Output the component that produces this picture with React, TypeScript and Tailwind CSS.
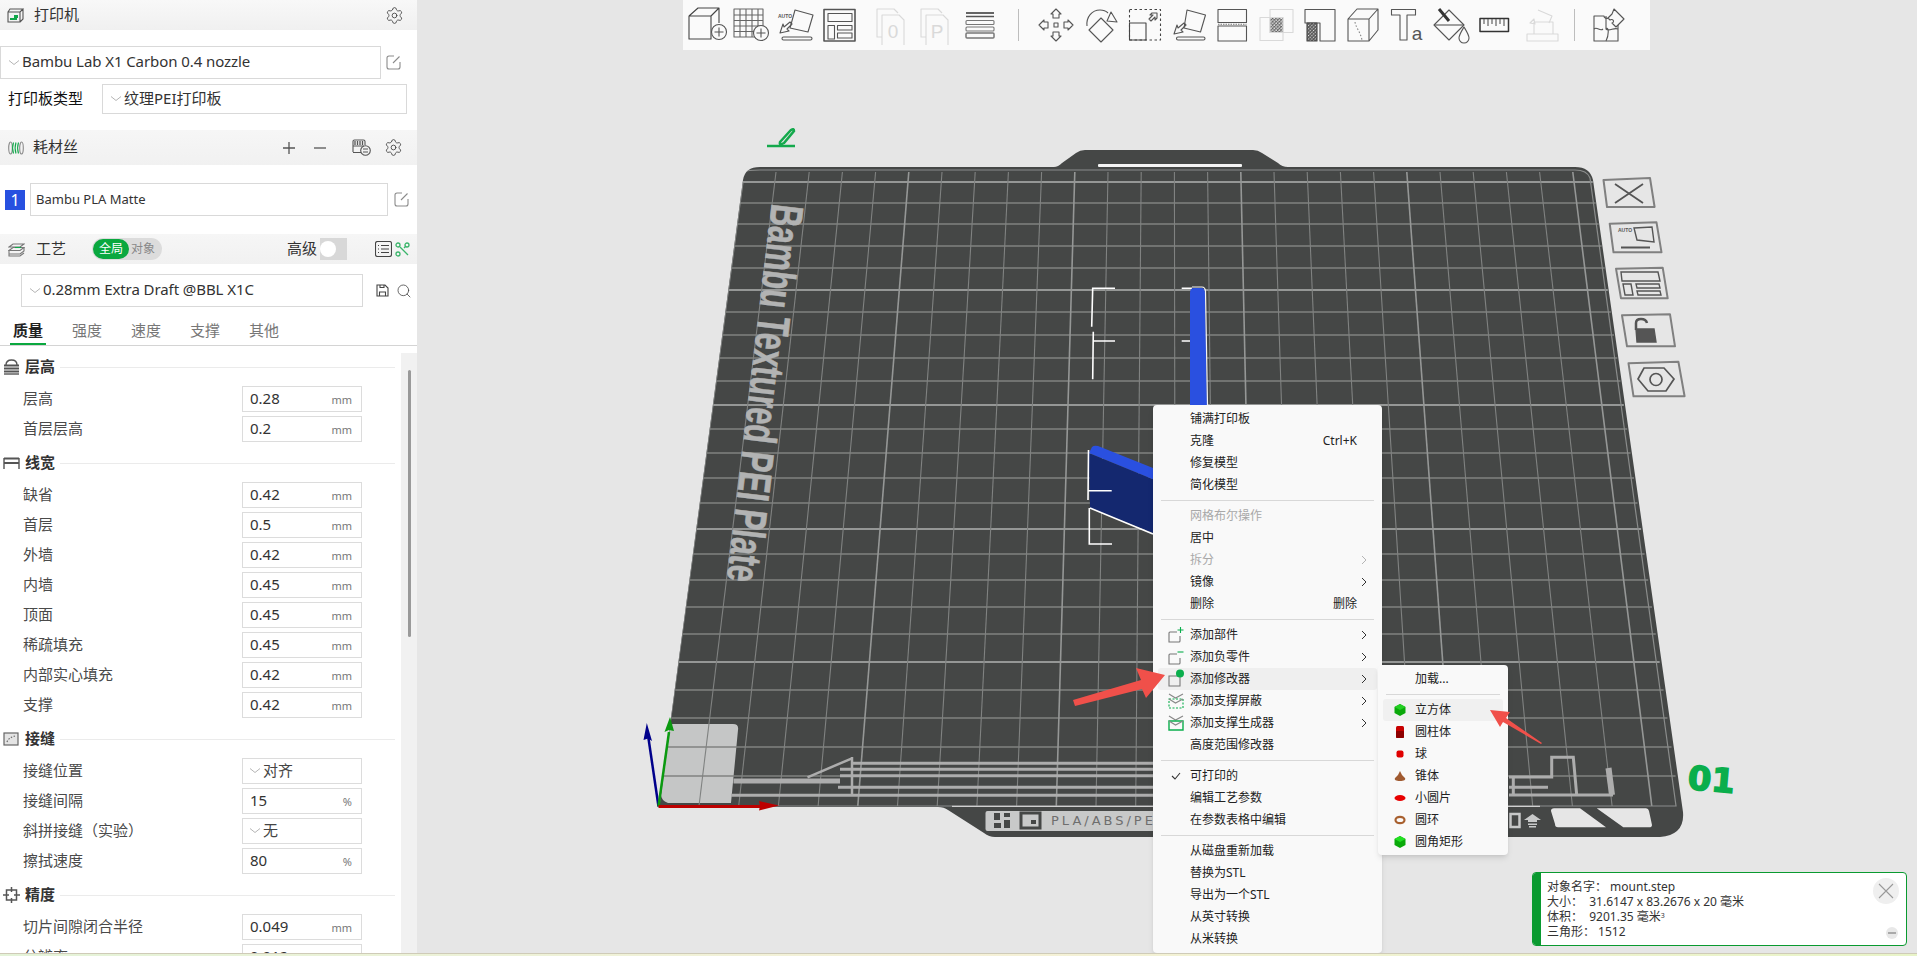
import { Search, Settings } from 'lucide-react';
import { ReactNode } from 'react';

const H_LINES = [182, 203, 224, 246, 268, 290, 312, 335, 358, 381, 405, 429, 453, 478, 503, 529, 554, 580, 607, 634, 662, 690, 718, 747, 776];
const BRIGHT_H = [182, 290, 405, 529, 662];

const leftAt = (y: number) => 743 - ((y - 180) * 83) / 625;
const rightAt = (y: number) => 1592 + ((y - 177) * 89) / 638;

type Row = { label: string; value?: string; unit?: string; select?: string };

const SECTIONS: { title: string; icon: ReactNode; rows: Row[] }[] = [
  {
    title: '层高',
    icon: (
      <svg width="17" height="16" viewBox="0 0 17 16" fill="none" stroke="#555" strokeWidth="1.4">
        <path d="M3 6c0-3 2-5 5.500-5S14 3 14 6" />
        <path d="M1 6.500h15M1 9.500h15M1 12.500h15" strokeWidth="2" />
        <path d="M1 15h15" />
      </svg>
    ),
    rows: [
      { label: '层高', value: '0.28', unit: 'mm' },
      { label: '首层层高', value: '0.2', unit: 'mm' },
    ],
  },
  {
    title: '线宽',
    icon: (
      <svg width="17" height="12" viewBox="0 0 17 12" fill="none" stroke="#555" strokeWidth="1.4">
        <path d="M1 1.500h15M1 6h15" strokeWidth="2" />
        <path d="M1 1v11M16 1v11" />
      </svg>
    ),
    rows: [
      { label: '缺省', value: '0.42', unit: 'mm' },
      { label: '首层', value: '0.5', unit: 'mm' },
      { label: '外墙', value: '0.42', unit: 'mm' },
      { label: '内墙', value: '0.45', unit: 'mm' },
      { label: '顶面', value: '0.45', unit: 'mm' },
      { label: '稀疏填充', value: '0.45', unit: 'mm' },
      { label: '内部实心填充', value: '0.42', unit: 'mm' },
      { label: '支撑', value: '0.42', unit: 'mm' },
    ],
  },
  {
    title: '接缝',
    icon: (
      <svg width="16" height="14" viewBox="0 0 16 14" fill="#e4e4e4" stroke="#666" strokeWidth="1.2">
        <rect x="1" y="1" width="14" height="12" />
        <path d="M4 10c1-3 4-5 8-6" strokeDasharray="1.500 1.500" />
      </svg>
    ),
    rows: [
      { label: '接缝位置', select: '对齐' },
      { label: '接缝间隔', value: '15', unit: '%' },
      { label: '斜拼接缝（实验）', select: '无' },
      { label: '擦拭速度', value: '80', unit: '%' },
    ],
  },
  {
    title: '精度',
    icon: (
      <svg width="17" height="16" viewBox="0 0 17 16" fill="none" stroke="#555" strokeWidth="1.500">
        <rect x="3.500" y="3" width="10" height="10" />
        <path d="M8.500 0v5M8.500 11v5M0 8h6M11 8h6" />
      </svg>
    ),
    rows: [
      { label: '切片间隙闭合半径', value: '0.049', unit: 'mm' },
      { label: '分辨率', value: '0.012', unit: 'mm' },
    ],
  },
];

function Chevron() {
  return (
    <svg width="10" height="6" viewBox="0 0 10 6" fill="none" stroke="#b5b5b5" className="shrink-0">
      <path d="M0 .5l5 4 5-4" />
    </svg>
  );
}

function EditIcon() {
  return (
    <svg width="15" height="15" viewBox="0 0 15 15" fill="none" stroke="#8b8b8b" strokeWidth="1.1" className="shrink-0">
      <path d="M8 1H3a2 2 0 0 0-2 2v9a2 2 0 0 0 2 2h9a2 2 0 0 0 2-2V7" />
      <path d="M7 8l6.500-6.500" />
    </svg>
  );
}

function Field({ label, value, unit, select }: Row) {
  return (
    <div className="flex items-center h-[30px] pl-[23px]">
      <span className="w-[219px] pb-[2px] text-[15px] leading-none text-[#4a4a4a]">{label}</span>
      <div className="w-[120px] h-[26px] border border-[#dcdcdc] flex items-center pl-[7px] pr-[9px]">
        {select ? (
          <>
            <Chevron />
            <span className="ml-[3px] pb-[2px] text-[15px] text-[#444]">{select}</span>
          </>
        ) : (
          <>
            <span className="flex-1 pb-[2px] text-[15px] text-[#333]">{value}</span>
            <span className="text-[11px] text-[#777] mt-[3px]">{unit}</span>
          </>
        )}
      </div>
    </div>
  );
}

function Sidebar() {
  return (
    <aside className="w-[417px] shrink-0 bg-white flex flex-col overflow-hidden">
      <div className="h-[30px] flex items-center pl-[7px] pr-[13px] bg-gradient-to-b from-[#f8f8f8] to-[#f0f0f0]">
        <svg width="17" height="15" viewBox="0 0 17 15" fill="none" stroke="#555" strokeWidth="1.100">
          <path d="M1 4h12v10H1zM1 4l2-3h13l-3 3M16 1v10l-3 3" />
          <path d="M3 10h7v2H3zM7 7h4v3H7z" fill="#12a84b" stroke="none" />
        </svg>
        <span className="ml-[10px] flex-1 pb-[2px] text-[15px] text-[#333]">打印机</span>
        <Settings size={19} strokeWidth={1.1} color="#444" />
      </div>

      <div className="mt-[16px] flex items-center">
        <div className="w-[381px] h-[33px] border border-[#d9d9d9] flex items-center pl-[8px]">
          <Chevron />
          <span className="ml-[3px] pb-[2px] text-[15px] tracking-[-0.08px] text-[#333] whitespace-nowrap">Bambu Lab X1 Carbon 0.4 nozzle</span>
        </div>
        <span className="ml-[5px]">
          <EditIcon />
        </span>
      </div>

      <div className="mt-[5px] flex items-center h-[30px]">
        <span className="w-[102px] pl-[8px] pb-[2px] text-[15px] text-[#111]">打印板类型</span>
        <div className="w-[305px] h-[30px] border border-[#d9d9d9] flex items-center pl-[8px]">
          <Chevron />
          <span className="ml-[3px] pb-[2px] text-[15px] text-[#333]">纹理PEI打印板</span>
        </div>
      </div>

      <div className="mt-[16px] h-[35px] flex items-center pl-[8px] bg-gradient-to-b from-[#f6f6f6] to-[#f1f1f1]">
        <svg width="16" height="14" viewBox="0 0 16 14" fill="none" stroke="#888" strokeWidth="1.100">
          <ellipse cx="2.500" cy="7" rx="1.800" ry="6" />
          <ellipse cx="13.500" cy="7" rx="1.800" ry="6" />
          <path d="M5.500 1.500c-1 3-1 8 0 11M8 1.500c-1 3-1 8 0 11M10.500 1.500c-1 3-1 8 0 11" stroke="#12a84b" />
        </svg>
        <span className="ml-[9px] w-[249px] pb-[2px] text-[15px] text-[#333]">耗材丝</span>
        <svg width="14" height="14" viewBox="0 0 14 14" stroke="#555" strokeWidth="1.300">
          <path d="M1 7h12M7 1v12" />
        </svg>
        <svg width="14" height="14" viewBox="0 0 14 14" stroke="#555" strokeWidth="1.300" className="ml-[17px]">
          <path d="M1 7h12" />
        </svg>
        <svg width="19" height="17" viewBox="0 0 19 17" fill="none" stroke="#555" strokeWidth="1.100" className="ml-[25px]">
          <path d="M1 13V2.500A1.500 1.500 0 0 1 2.500 1h9A1.500 1.500 0 0 1 13 2.500V6M1 7h11M1 13.500h8" />
          <path d="M3 2v4M5.500 2v4M8 2v4M10.500 2v4" strokeWidth="1.300" />
          <circle cx="13.500" cy="11.500" r="4.800" />
          <path d="M11 10h5M11 13h5" />
        </svg>
        <span className="ml-[13px]">
          <Settings size={19} strokeWidth={1.1} color="#444" />
        </span>
      </div>

      <div className="mt-[18px] h-[33px] flex items-center">
        <div className="ml-[5px] w-[20px] h-[20px] bg-[#2750e0] text-white text-[16px] leading-[20px] text-center">1</div>
        <div className="ml-[5px] w-[358px] h-[33px] border border-[#d9d9d9] flex items-center pl-[5px] text-[13px] text-[#333]">
          Bambu PLA Matte
        </div>
        <span className="ml-[6px]">
          <EditIcon />
        </span>
      </div>

      <div className="mt-[18px] h-[30px] flex items-center pl-[8px] bg-gradient-to-b from-[#f6f6f6] to-[#f1f1f1]">
        <svg width="17" height="15" viewBox="0 0 17 15" fill="none" stroke="#777" strokeWidth="1.100">
          <path d="M1 5l4-3h11l-4 3z" />
          <path d="M1 8.500l4-3h11l-4 3z" />
          <path d="M1 8.500V12h11l4-3V6M1 12v2h11l4-3" />
          <path d="M7 5.500h6" stroke="#12a84b" />
        </svg>
        <span className="ml-[11px] w-[56px] pb-[2px] text-[15px] text-[#333]">工艺</span>
        <div className="relative w-[70px] h-[22px] rounded-full bg-[#dcdcdc] flex items-center">
          <span className="w-[36px] h-[20px] ml-px rounded-full bg-[#0aa83f] text-white text-[12px] leading-[20px] text-center">全局</span>
          <span className="ml-[2px] text-[12px] text-[#888]">对象</span>
        </div>
        <span className="ml-[125px] pb-[2px] text-[15px] text-[#333]">高级</span>
        <div className="ml-[3px] w-[27px] h-[22px] bg-[#d8d8d8] flex items-center">
          <span className="w-[16px] h-[16px] rounded-full bg-white" />
        </div>
        <svg width="17" height="16" viewBox="0 0 17 16" fill="none" stroke="#444" strokeWidth="1.100" className="ml-[28px]">
          <rect x=".5" y=".5" width="16" height="15" rx="2" />
          <path d="M3 4.500h1M6 4.500h8M3 8h1M6 8h8M3 11.500h1M6 11.500h8" />
        </svg>
        <svg width="15" height="15" viewBox="0 0 15 15" fill="none" stroke="#3bb56b" strokeWidth="1.300" className="ml-[3px]">
          <circle cx="3" cy="3" r="2" />
          <circle cx="12" cy="3" r="2" />
          <circle cx="3" cy="12" r="2" />
          <path d="M5 5l8 8M9 6l2-2" />
        </svg>
      </div>

      <div className="mt-[10px] h-[33px] flex items-center">
        <div className="ml-[21px] w-[342px] h-[33px] border border-[#d9d9d9] flex items-center pl-[8px]">
          <Chevron />
          <span className="ml-[3px] pb-[2px] text-[15px] tracking-[-0.08px] text-[#333] whitespace-nowrap">0.28mm Extra Draft @BBL X1C</span>
        </div>
        <svg width="13" height="13" viewBox="0 0 13 13" fill="none" stroke="#444" strokeWidth="1.100" className="ml-[13px]">
          <path d="M1 1h8l3 3v8H1zM3.500 12V8h6v4M4 1v2.500h4V1" />
        </svg>
        <span className="ml-[7px]">
          <Search size={16} strokeWidth={1.2} color="#444" />
        </span>
      </div>

      <div className="mt-[11px] h-[28px] flex border-b border-[#d4d4d4] pl-[13px] gap-[29px] text-[15px] text-[#777] leading-[24px]">
        <span className="relative font-bold text-[#222]">
          质量
          <span className="absolute -left-[3px] -right-[3px] bottom-0 h-[2px] bg-[#0aa83f]" />
        </span>
        <span>强度</span>
        <span>速度</span>
        <span>支撑</span>
        <span>其他</span>
      </div>

      <div className="flex-1 flex min-h-0 overflow-hidden">
        <div className="w-[401px] pt-[4px]">
          {SECTIONS.map((s) => (
            <section key={s.title} className="mb-[2px]">
              <div className="h-[34px] flex items-center pl-[3px] pr-[6px]">
                <span className="w-[22px] flex">{s.icon}</span>
                <span className="pb-[2px] text-[15px] font-bold text-[#333]">{s.title}</span>
                <span className="flex-1 ml-[5px] h-px bg-[#ebebeb]" />
              </div>
              {s.rows.map((r) => (
                <Field key={r.label} {...r} />
              ))}
            </section>
          ))}
        </div>
        <div className="w-[16px] mt-[7px] bg-[#f1f1f1] pl-[7px] pt-[17px]">
          <div className="w-[3px] h-[267px] bg-[#9a9a9a] rounded-full" />
        </div>
      </div>
    </aside>
  );
}

function Ico({ children, off }: { children: ReactNode; off?: boolean }) {
  return (
    <svg
      width="40"
      height="40"
      viewBox="0 0 40 40"
      fill="none"
      stroke={off ? '#d9d9d9' : '#555'}
      strokeWidth="1.100"
      strokeLinejoin="round"
      className="shrink-0"
    >
      <defs>
        <pattern id="hatch" width="2.400" height="2.400" patternUnits="userSpaceOnUse" patternTransform="rotate(-45)">
          <rect width="2.400" height="2.400" fill="#e8e8e8" />
          <path d="M0 0H2.400" stroke="#555" strokeWidth="1.200" />
        </pattern>
        <pattern id="hatch-off" width="2.400" height="2.400" patternUnits="userSpaceOnUse" patternTransform="rotate(-45)">
          <rect width="2.400" height="2.400" fill="#f2f2f2" />
          <path d="M0 0H2.400" stroke="#d0d0d0" strokeWidth="1.200" />
        </pattern>
      </defs>
      {children}
    </svg>
  );
}

const Sep = ({ className }: { className: string }) => <div className={`w-px h-[32px] bg-[#bdbdbd] shrink-0 ${className}`} />;

function Toolbar() {
  return (
    <div className="absolute left-[266px] top-0 w-[967px] h-[50px] bg-[#fafafa] flex items-center gap-1 pl-[5px]">
      <Ico>
        <path d="M1 11h22v23H1zM1 11l9-8h21v15M23 11l8-8" stroke="#444" />
        <circle cx="31" cy="27" r="7.500" fill="#fafafa" />
        <path d="M26.500 27h9M31 22.500v9" />
      </Ico>
      <Ico>
        <path d="M2 4h29v28H2zM8 4v28M14 4v28M20 4v28M26 4v28M2 10h29M2 15.500h29M2 21h29M2 26.500h29" stroke="#666" />
        <circle cx="29" cy="28" r="7.500" fill="#fafafa" />
        <path d="M24.500 28h9M29 23.500v9" />
      </Ico>
      <Ico>
        <path d="M19 5l18 5-5 17-18-4z" />
        <text x="2" y="13" fontSize="5" fontWeight="700" fill="#555" stroke="none" fontFamily="'Liberation Sans', sans-serif">AUTO</text>
        <path d="M14 17L8 22l-1-3-3 9 9-2-2-2 5-5z" />
        <rect x="6" y="32" width="30" height="3" rx="1.500" />
      </Ico>
      <Ico>
        <path d="M4 4.500h31V36H4z" strokeWidth="1.600" />
        <path d="M8 8.500h24v8H8zM8 20.500h6.500V34H8zM17.500 20.500H32V25H17.500zM17.500 28H32v5H17.500z" />
      </Ico>
      <div className="ml-2">
        <Ico off>
          <path d="M26 8l-4-4H5v28h5M10 10h17l5 5v26H10z" />
          <text x="21" y="33" textAnchor="middle" fontSize="19" fill="#d9d9d9" stroke="none" fontFamily="'Liberation Sans', sans-serif">0</text>
        </Ico>
      </div>
      <Ico off>
        <path d="M26 8l-4-4H5v28h5M10 10h17l5 5v26H10z" />
        <text x="21" y="33" textAnchor="middle" fontSize="19" fill="#d9d9d9" stroke="none" fontFamily="'Liberation Sans', sans-serif">P</text>
      </Ico>
      <Ico>
        <path d="M6 8h28" strokeWidth="1.500" stroke="#333" />
        <path d="M6 11.500h28" strokeWidth="1.500" stroke="#555" />
        <rect x="6" y="15.500" width="28" height="4" rx="1" stroke="#777" />
        <rect x="6" y="22" width="28" height="4" rx="1" stroke="#777" />
        <rect x="6" y="28" width="28" height="5" rx="1" stroke="#777" strokeWidth="1.500" />
      </Ico>
      <Sep className="ml-[14px]" />
      <div className="ml-[13px]">
        <Ico>
          <rect x="18" y="18" width="4" height="4" />
          <path d="M20 4l5 5-2 0v4h-6V9h-2z" />
          <path d="M20 36l5-5h-2v-4h-6v4h-2z" />
          <path d="M3 20l5-5v2h4v6H8v2z" />
          <path d="M37 20l-5-5v2h-4v6h4v2z" />
        </Ico>
      </div>
      <Ico>
        <path d="M21 13l12 12-12 12L9 25z" />
        <path d="M7 21C6 12 12 5 20 5c3 0 6 1 8 3" />
        <path d="M31 7l6 10-10-1z" />
      </Ico>
      <Ico>
        <rect x="5.500" y="18" width="16.500" height="17" stroke="#444" />
        <rect x="5.500" y="4.500" width="31" height="30.500" strokeDasharray="2.500 2.500" stroke="#444" />
        <path d="M25 14l4-4h-3l2-2h5v5l-2 2v-3l-4 4z" />
      </Ico>
      <Ico>
        <path d="M19 5l18.500 5-5 17-16.500-4z" />
        <path d="M16 18l-6 5-1-3-3 9 9-2-2-2 5-5z" />
        <rect x="8.500" y="32" width="28.500" height="3" rx="1.500" />
      </Ico>
      <Ico>
        <path d="M6 4.500h28.500v13H6zM6 21h28.500v15H6z" />
        <path d="M6 19.300h28.500" strokeDasharray="1.500 1" stroke="#777" />
      </Ico>
      <Ico off>
        <rect x="14" y="4.500" width="23" height="23" />
        <rect x="4" y="12.500" width="23" height="23" />
        <path d="M14 12.500h13v15H14z" fill="url(#hatch-off)" />
      </Ico>
      <Ico>
        <path d="M5 4.500h30V36H20V18H5z" />
        <path d="M7 18h10v18H7z" fill="url(#hatch)" stroke="#444" />
      </Ico>
      <Ico>
        <path d="M4 14h21v22H4zM4 14l9-10h21v21l-9 11M25 14l9-10" />
        <path d="M11 17c1 6 5 9 7 18" strokeDasharray="1.500 2" stroke="#888" />
      </Ico>
      <Ico>
        <path d="M3.500 4.500h24v5.500H19v25h-7V10H3.500z" />
        <text x="29" y="35" textAnchor="middle" fontSize="19" fill="#555" stroke="none" fontFamily="'Liberation Sans', sans-serif">a</text>
      </Ico>
      <Ico>
        <path d="M17 5l15 15-15 15L2 20z" />
        <path d="M2 20h30" />
        <path d="M7 4l10 12" strokeWidth="3" stroke="#333" />
        <path d="M32 22c3 5 5 8 5 11a5 5 0 0 1-10 0c0-3 2-6 5-11z" fill="#fafafa" />
      </Ico>
      <Ico>
        <path d="M4 13.500h28.500v13H4z" strokeWidth="1.500" stroke="#333" />
        <path d="M8 14v5M12 14v7M16 14v5M20 14v7M24 14v5M28 14v7" />
      </Ico>
      <Ico off>
        <path d="M7 29h31v7H7zM14 29V17h19v12M10 18l4-4 1 5zM18 5l14 6-3 7" />
      </Ico>
      <Sep className="ml-[10px]" />
      <div className="ml-[10px]">
        <Ico>
          <path d="M5 11h10c0 3 6 3 6 1l8-1v25H5z" />
          <path d="M5 24c3-3 6 3 9 0M17 11v13c3-3 3 6 0 12M17 24c3 3 8-2 12 0" />
          <path d="M24 3l10 10-8 8-4-4c3-1 1-5-2-3l-2-2 4-4z" fill="#fafafa" transform="translate(1 1)" />
        </Ico>
      </div>
    </div>
  );
}

function Plate() {
  const vertical = Array.from({ length: 25 }, (_, i) => ({
    i,
    x1: 776 + 33.2 * i,
    x2: 699 + 39.7 * i,
  }));

  return (
    <svg width="1500" height="953" viewBox="417 0 1500 953" fill="none" className="absolute left-0 top-0">
      <defs>
        <clipPath id="plate-clip">
          <path d="M743 180Q745 167 760 167L1054 167Q1058 167 1062 163L1076 153Q1080 150 1085 150L1253 150Q1258 150 1262 153L1278 163Q1282 167 1288 167L1575 167Q1590 167 1593 180L1683 812Q1685 835 1660 837L995 837Q989 837 984 833L948 810Q944 807 938 807L659 807Z" />
        </clipPath>
      </defs>
      <path
        d="M743 180Q745 167 760 167L1054 167Q1058 167 1062 163L1076 153Q1080 150 1085 150L1253 150Q1258 150 1262 153L1278 163Q1282 167 1288 167L1575 167Q1590 167 1593 180L1683 812Q1685 835 1660 837L995 837Q989 837 984 833L948 810Q944 807 938 807L659 807Z"
        fill="#454746"
      />
      <rect x="1098" y="164" width="144" height="3" rx="1" fill="#f4f4f4" />
      <path d="M670 726Q670 724 673 724L733 724Q739 724 738 730L731 803L668 803Q661 800 661 795Z" fill="#c5c6c6" />

      <g clipPath="url(#plate-clip)">
        {H_LINES.map((y) => (
          <line
            key={y}
            x1={leftAt(y)}
            x2={rightAt(y)}
            y1={y}
            y2={y}
            stroke={BRIGHT_H.includes(y) ? '#959796' : '#808281'}
            strokeWidth={BRIGHT_H.includes(y) ? 1.8 : 1.4}
          />
        ))}
        {vertical.map((v) => (
          <line
            key={v.i}
            x1={v.x1}
            x2={v.x2}
            y1={172}
            y2={806}
            stroke={v.i % 5 === 4 ? '#959796' : '#808281'}
            strokeWidth={v.i % 5 === 4 ? 1.6 : 1.1}
          />
        ))}
        <path d="M745 172Q746 170 760 170H1575Q1587 170 1590 178L1676 806H659L743 182" stroke="#8a8c8b" strokeWidth="1.200" />
      </g>

      <text
        transform="translate(772 203) rotate(96.8)"
        fontFamily="'Liberation Sans', sans-serif"
        fontSize="46"
        fontWeight="700"
        fill="#b2b3b3"
        stroke="#b2b3b3"
        strokeWidth="0.6"
        textLength="380"
        lengthAdjust="spacingAndGlyphs"
      >
        Bambu Textured PEI Plate
      </text>

      <g stroke="#adadad" strokeWidth="3">
        <path d="M852 763.300H1153M840 769.300H1153M840 775.700H1153M838 787.300H1153M731 795.300H1153" />
        <path d="M733.500 781H840" strokeWidth="5" />
        <path d="M807.500 777.300L852 758.300M852 757V795" strokeWidth="2.500" />
        <path d="M1509 777H1551.700V757.300H1573.300L1576.700 795H1613M1509 787.300H1548M1509 795H1613M1513.300 777V795" />
        <path d="M1612 795L1608.500 768" strokeWidth="6" />
      </g>

      <path d="M952 806.300H1540" stroke="#d0d0d0" strokeWidth="1.200" />
      <rect x="985.500" y="811" width="200" height="20" rx="2" fill="#c8c9c9" />
      <path d="M994 813h6v7h-6zM1004 813h6v4h-6zM994 823h7v5h-7zM1004 820h6v8h-6z" fill="#454746" />
      <rect x="1021" y="813" width="19" height="15" fill="none" stroke="#454746" strokeWidth="3" />
      <rect x="1031" y="820" width="5" height="4" fill="#454746" />
      <text x="1051" y="825" fontFamily="'DejaVu Sans', sans-serif" fontSize="13" letterSpacing="3" fill="#6e6e6e">
        PLA/ABS/PETG
      </text>
      <rect x="1510.500" y="814" width="9" height="13" fill="none" stroke="#c8c9c9" strokeWidth="2.500" />
      <path d="M1524 820l8.500-6 8.500 6h-4v2h-9v-2zM1528 823.500h9v1.500h-9zM1529 826h7v1.500h-7z" fill="#c8c9c9" />
      <path d="M1554 808.300H1580L1606 827.300H1558Q1555 827.300 1555 824L1551 811Q1551 808.300 1554 808.300Z" fill="#e6e6e6" />
      <path d="M1596.700 808.300H1646Q1648.500 808.300 1649 811L1652 825Q1652 827.300 1649 827.300H1623.300Z" fill="#e6e6e6" />

      <g stroke="#fff" strokeWidth="1.600">
        <path d="M1115 288.300H1092.700L1091.700 326.700M1093.300 331.700L1092.700 379.300M1093.300 341H1115" />
        <path d="M1181.700 288.300H1192M1181.700 341H1190" />
      </g>
      <path d="M1190 293Q1190 288 1194 288H1201Q1205 288 1205 293L1207 405H1190Z" fill="#2a50e0" />
      <path d="M1192 287H1202Q1205 287 1205.500 291L1207.500 405" stroke="#f4f4f4" strokeWidth="1.200" />
      <path d="M1089 453.300L1153 479.300V533L1090 508Z" fill="#14286f" />
      <path d="M1089 453L1092 447Q1094 445 1098 446L1153 468V479.300Z" fill="#2a50e0" />
      <g stroke="#fff" strokeWidth="1.600">
        <path d="M1088.500 450L1088 500M1090 508L1153 534M1088 490.700H1111.700M1089.300 508V544H1112" />
      </g>

      <g>
        <path d="M658.500 806.500L648 735" stroke="#00008b" strokeWidth="2.500" />
        <path d="M646.800 723L652 741L648 738.500L643.500 740Z" fill="#00008b" />
        <path d="M658.500 806.500L669 732" stroke="#0b9a10" strokeWidth="2.500" />
        <path d="M670 717L674 731L669 730L664.500 732Z" fill="#0b9a10" />
        <path d="M658.500 806.500H762" stroke="#bd0000" strokeWidth="3" />
        <path d="M779 805.500L759 801L760 806L759 810.500Z" fill="#bd0000" />
      </g>

      <g stroke="#808080" strokeWidth="2" fill="#e6e6e6" strokeLinejoin="round">
        <path d="M1603.500 180L1650 178L1654.600 207L1607 207Z" />
        <path d="M1609.700 223.700L1656.500 222.300L1661.500 252.300L1613.500 252.300Z" />
        <path d="M1616 268.700L1662.700 267.700L1667.700 298.300L1621 298.300Z" />
        <path d="M1622 315.300L1670 314.300L1675 346.300L1627 346.300Z" />
        <path d="M1628.500 363.300L1678.400 361.700L1684.600 396.300L1633.500 396.300Z" />
      </g>
      <g stroke="#555" fill="none" strokeWidth="1.400">
        <path d="M1615 184L1643 203M1643 184L1615 203" strokeWidth="1.800" />
        <path d="M1634 228L1652 227L1654 242L1637 240Z" />
        <path d="M1621 247.500H1650" strokeWidth="2" />
        <path d="M1621 272H1658L1660 281H1622ZM1623 284H1631L1633 295H1625ZM1636 284H1659L1660 288H1637ZM1637 291H1660L1661 295H1638Z" />
        <path d="M1636 330V323Q1636 319 1641 319Q1646 319 1647 323" strokeWidth="2.500" />
        <path d="M1636 329H1654L1656 342H1637Z" fill="#555" />
        <path d="M1644 368H1664L1674 379L1666 391H1648L1638 379Z" strokeWidth="1.700" />
        <ellipse cx="1656" cy="379.500" rx="6" ry="6" strokeWidth="1.700" />
      </g>
      <text x="1618" y="232" fontSize="5" fontWeight="700" fill="#555" fontFamily="'Liberation Sans', sans-serif">AUTO</text>

      <path d="M780 142L791 130Q794 128 794 131L784 143Q779 146 780 142Z" stroke="#14a94c" strokeWidth="2.500" />
      <path d="M767 146H795" stroke="#14a94c" strokeWidth="2.500" />

      <text
        transform="translate(1687 789) rotate(5)"
        fontFamily="'DejaVu Sans', sans-serif"
        fontWeight="700"
        fontSize="33"
        fill="#0aae4c"
        stroke="#0aae4c"
        strokeWidth="1.500"
        textLength="47"
        lengthAdjust="spacingAndGlyphs"
      >
        01
      </text>
    </svg>
  );
}

type MenuEntry = { label?: string; right?: string; arrow?: boolean; off?: boolean; sep?: boolean; icon?: ReactNode; active?: boolean; check?: boolean };

const partIcon = (
  <svg width="16" height="16" viewBox="0 0 16 16" fill="none" stroke="#777" strokeWidth="1.100">
    <path d="M9 5H2a1 1 0 0 0-1 1v9h10a1 1 0 0 0 1-1V9" />
    <path d="M12.500 0v6M9.500 3h6" stroke="#0aae4c" />
  </svg>
);
const negIcon = (
  <svg width="16" height="16" viewBox="0 0 16 16" fill="none" stroke="#777" strokeWidth="1.100">
    <path d="M9 5H2a1 1 0 0 0-1 1v9h10a1 1 0 0 0 1-1V9" />
    <path d="M9.500 3h6" stroke="#0aae4c" />
  </svg>
);
const modIcon = (
  <svg width="16" height="16" viewBox="0 0 16 16" fill="none" stroke="#777" strokeWidth="1.100" className="overflow-visible">
    <path d="M1 5h11v10H1z" />
    <circle cx="12" cy="2.500" r="4" fill="#0aae4c" stroke="none" />
  </svg>
);
const blockIcon = (
  <svg width="16" height="16" viewBox="0 0 16 16" fill="none" stroke="#888" strokeWidth="1.100">
    <path d="M1 1l6.500 4L15 1" />
    <path d="M1 6h14v9H1z" stroke="#0aae4c" strokeDasharray="2 1.500" />
    <path d="M1 6l6.500 4L15 6" />
  </svg>
);
const genIcon = (
  <svg width="16" height="16" viewBox="0 0 16 16" fill="none" stroke="#888" strokeWidth="1.100">
    <path d="M1 1l6.500 4L15 1" />
    <path d="M1 6h14v9H1z" stroke="#0aae4c" strokeWidth="1.400" />
    <path d="M1 6l6.500 4L15 6" />
  </svg>
);

const MENU: MenuEntry[] = [
  { label: '铺满打印板' },
  { label: '克隆', right: 'Ctrl+K' },
  { label: '修复模型' },
  { label: '简化模型' },
  { sep: true },
  { label: '网格布尔操作', off: true },
  { label: '居中' },
  { label: '拆分', off: true, arrow: true },
  { label: '镜像', arrow: true },
  { label: '删除', right: '删除' },
  { sep: true },
  { label: '添加部件', arrow: true, icon: partIcon },
  { label: '添加负零件', arrow: true, icon: negIcon },
  { label: '添加修改器', arrow: true, icon: modIcon, active: true },
  { label: '添加支撑屏蔽', arrow: true, icon: blockIcon },
  { label: '添加支撑生成器', arrow: true, icon: genIcon },
  { label: '高度范围修改器' },
  { sep: true },
  { label: '可打印的', check: true },
  { label: '编辑工艺参数' },
  { label: '在参数表格中编辑' },
  { sep: true },
  { label: '从磁盘重新加载' },
  { label: '替换为STL' },
  { label: '导出为一个STL' },
  { label: '从英寸转换' },
  { label: '从米转换' },
];

const hex = (top: string, side: string) => (
  <svg width="12" height="12" viewBox="0 0 12 12">
    <path d="M6 0l5.500 3v6L6 12 .5 9V3z" fill={side} />
    <path d="M6 0l5.500 3L6 6 .5 3z" fill={top} />
  </svg>
);

const SUBMENU: { label: string; icon: ReactNode }[] = [
  { label: '立方体', icon: hex('#22d022', '#0aa80a') },
  {
    label: '圆柱体',
    icon: (
      <svg width="12" height="12" viewBox="0 0 12 12">
        <rect x="2" y="0" width="8" height="12" rx="1.500" fill="#c80000" />
        <rect x="2" y="5" width="8" height="7" rx="1" fill="#8e0000" />
      </svg>
    ),
  },
  {
    label: '球',
    icon: (
      <svg width="12" height="12" viewBox="0 0 12 12">
        <rect x="2.500" y="2.500" width="7" height="7" rx="2" fill="#e00000" />
      </svg>
    ),
  },
  {
    label: '锥体',
    icon: (
      <svg width="12" height="12" viewBox="0 0 12 12">
        <path d="M6 1l2 4 3 3c1 2-1 3-5 3S0 10 1 8l3-3z" fill="#a05a30" />
      </svg>
    ),
  },
  {
    label: '小圆片',
    icon: (
      <svg width="12" height="12" viewBox="0 0 12 12">
        <ellipse cx="6" cy="6" rx="5.500" ry="3" fill="#e80000" />
      </svg>
    ),
  },
  {
    label: '圆环',
    icon: (
      <svg width="12" height="12" viewBox="0 0 12 12" fill="none">
        <ellipse cx="6" cy="6" rx="4.500" ry="3.200" stroke="#a8602f" strokeWidth="2.200" />
      </svg>
    ),
  },
  { label: '圆角矩形', icon: hex('#22e022', '#0aaa0a') },
];

const menuText = 'text-[12px] leading-[22px] text-[#222]';

function ContextMenu() {
  return (
    <div className={`absolute left-[736px] top-[405px] w-[229px] h-[548px] bg-[#f9f9f9] rounded-[4px] shadow-md pt-[3px] px-[5px] ${menuText}`}>
      {MENU.map((m, i) =>
        m.sep ? (
          <div key={i} className="h-[9px] mx-[3px] flex items-center">
            <div className="w-full h-px bg-[#d8d8d8]" />
          </div>
        ) : (
          <div
            key={m.label}
            className={`h-[22px] flex items-center rounded-[3px] ${m.active ? 'bg-[#efefef]' : ''} ${m.off ? 'text-[#a8a8a8]' : ''}`}
          >
            <span className="w-[32px] pl-[3px] flex justify-center items-center">
              {m.icon}
              {m.check && (
                <svg width="10" height="8" viewBox="0 0 10 8" fill="none" stroke="#333" strokeWidth="1.100">
                  <path d="M1 4l3 3 5-6" />
                </svg>
              )}
            </span>
            <span className="flex-1">{m.label}</span>
            {m.right && <span className="pr-[20px]">{m.right}</span>}
            {m.arrow && (
              <svg width="6" height="10" viewBox="0 0 6 10" fill="none" stroke={m.off ? '#b5b5b5' : '#333'} className="mr-[10px]">
                <path d="M1 1l4 4-4 4" />
              </svg>
            )}
          </div>
        ),
      )}
    </div>
  );
}

function SubMenu() {
  return (
    <div className={`absolute left-[961px] top-[665px] w-[130px] h-[190px] bg-[#f9f9f9] rounded-[4px] shadow-md pt-[3px] px-[5px] ${menuText}`}>
      <div className="h-[22px] pl-[32px]">加载...</div>
      <div className="h-[9px] mx-[3px] flex items-center">
        <div className="w-full h-px bg-[#d8d8d8]" />
      </div>
      {SUBMENU.map((s, i) => (
        <div key={s.label} className={`h-[22px] flex items-center rounded-[3px] ${i === 0 ? 'bg-[#f0f0f0]' : ''}`}>
          <span className="w-[32px] pl-[1px] flex justify-center">{s.icon}</span>
          <span>{s.label}</span>
        </div>
      ))}
    </div>
  );
}

function Notification() {
  return (
    <div className="absolute left-[1115px] top-[872px] w-[375px] h-[74px] rounded-[4px] border border-[#0a9a30] bg-white flex">
      <div className="w-[8px] bg-[#0a9a30] rounded-l-[3px]" />
      <div className="pl-[6px] pt-[6px] text-[12px] leading-[15px] text-[#333]">
        <p>对象名字：&nbsp;mount.step</p>
        <p>大小：&nbsp;&nbsp;31.6147 x 83.2676 x 20 毫米</p>
        <p>
          体积：&nbsp;&nbsp;9201.35 毫米<sup className="text-[7px]">3</sup>
        </p>
        <p>三角形：&nbsp;1512</p>
      </div>
      <div className="absolute right-[7px] top-[5px] w-[26px] h-[26px] rounded-full bg-[#efefef] flex items-center justify-center">
        <svg width="16" height="16" viewBox="0 0 16 16" stroke="#999" strokeWidth="1.100">
          <path d="M1 1l14 14M15 1L1 15" />
        </svg>
      </div>
      <div className="absolute right-[8px] bottom-[6px] w-[12px] h-[12px] rounded-full bg-[#e8e8e8] flex items-center justify-center">
        <span className="w-[8px] h-[2px] bg-[#aaa]" />
      </div>
    </div>
  );
}

function RedArrows() {
  return (
    <svg width="1500" height="953" viewBox="417 0 1500 953" className="absolute left-0 top-0 pointer-events-none">
      <path d="M1073 700L1141 680L1136 668L1165 675L1146 698L1142 689L1075 706Z" fill="#f0504a" />
      <path d="M1490 710L1510 712L1506 718L1542 743L1541 744L1503 722L1500 727Z" fill="#f0504a" />
    </svg>
  );
}

export default function App() {
  return (
    <div className="h-screen flex flex-col overflow-hidden font-['Noto_Sans','Noto_Sans_CJK_SC',sans-serif]">
      <div className="flex-1 min-h-0 flex">
        <Sidebar />
        <main className="relative flex-1 bg-[#e6e6e6] overflow-hidden">
          <Plate />
          <Toolbar />
          <ContextMenu />
          <SubMenu />
          <Notification />
          <RedArrows />
        </main>
      </div>
      <div className="h-[3px] shrink-0 border-t border-[#cfcbb8] bg-gradient-to-r from-[#e4f3d8] via-[#f6f1d8] to-[#e8f4c8]" />
    </div>
  );
}
